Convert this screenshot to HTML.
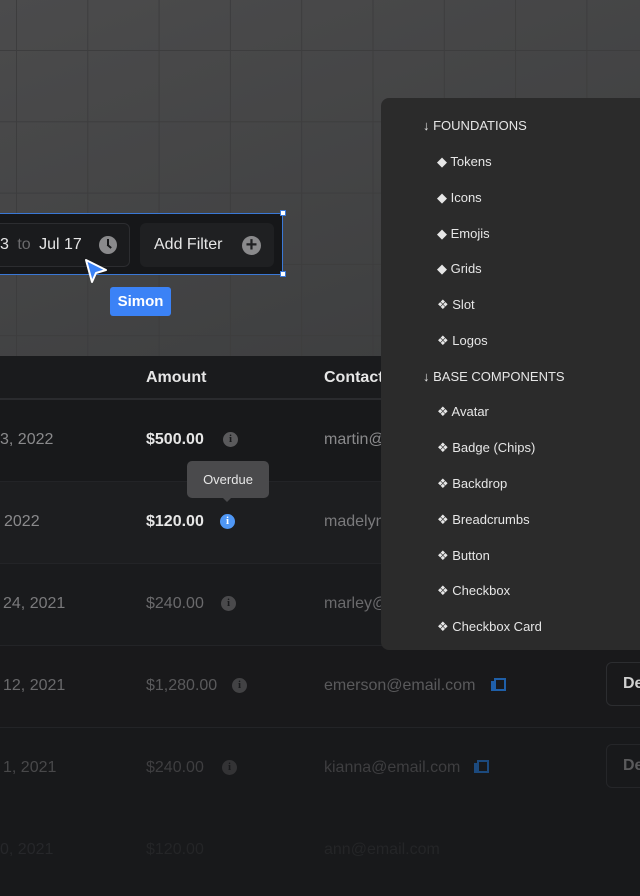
<!DOCTYPE html>
<html><head><style>
*{margin:0;padding:0;box-sizing:border-box}
body{width:640px;height:896px;overflow:hidden;background:#18191b;font-family:"Liberation Sans",sans-serif;position:relative}
.top{position:absolute;left:0;top:0;width:640px;height:356px;
background-image:linear-gradient(#3d3d3e 1px,transparent 1px),linear-gradient(90deg,#3d3d3e 1px,transparent 1px),linear-gradient(160deg,#4b4b4c,#3c3d3e);
background-size:71.3px 71.3px,71.3px 71.3px,100% 100%;background-position:16px 50px,16px 50px,0 0}
.a{position:absolute;white-space:nowrap}
.row{position:absolute;left:0;width:640px;height:82px;border-bottom:1px solid #232427}
.t{font-size:16px}
.info{position:absolute;width:15px;height:15px;border-radius:50%;background:#5a5a5c;color:#18191b;font-size:11px;font-weight:bold;text-align:center;line-height:15px;font-family:"Liberation Serif",serif}
.menu{position:absolute;left:381px;top:98px;width:270px;height:552px;background:#2b2b2b;border-radius:8px;color:#e6e6e6;font-size:13px}
.menu div{position:absolute;white-space:nowrap}
.copy{position:absolute;width:13px;height:13px}
.copy:before{content:"";position:absolute;left:0;top:3px;width:9px;height:10px;background:#1f5fa8;}
.copy:after{content:"";position:absolute;left:3px;top:0;width:8px;height:9px;border:2px solid #1f5fa8;background:#18191b}
.btn{position:absolute;left:606px;width:60px;height:44px;border:1px solid #2c2d30;border-radius:6px;color:#d0d0d0;font-weight:bold;font-size:16px;padding:12px 0 0 16px}
</style></head><body>
<div class="top"></div>
<div class="a" style="left:-3px;top:213px;width:286px;height:62px;background:#161719;border:1px solid #3a78d6"></div>
<div class="a" style="left:-10px;top:223px;width:140px;height:44px;border:1px solid #2c2d30;border-radius:6px;background:#1a1b1d"></div>
<div class="a t" style="left:0;top:236px;color:#e6e6e6">3 <span style="color:#6a6a6c;margin:0 4px">to</span> Jul 17</div>
<div class="a" style="left:99px;top:236px;width:18px;height:18px;border-radius:50%;background:#8a8a8c"><div style="position:absolute;left:8px;top:3px;width:2px;height:7px;background:#161719"></div><div style="position:absolute;left:9px;top:8px;width:5px;height:2px;background:#161719;transform:rotate(40deg);transform-origin:0 0"></div></div>
<div class="a" style="left:140px;top:223px;width:134px;height:44px;border-radius:6px;background:#1f2022"></div>
<div class="a t" style="left:154px;top:236px;color:#e6e6e6">Add Filter</div>
<div class="a" style="left:242px;top:236px;width:19px;height:19px;border-radius:50%;background:#8a8a8c;color:#1f2022;font-size:20px;font-weight:bold;text-align:center;line-height:19px">+</div>
<div class="a" style="left:280px;top:210px;width:6px;height:6px;background:#fff;border:1px solid #3a78d6"></div>
<div class="a" style="left:280px;top:271px;width:6px;height:6px;background:#fff;border:1px solid #3a78d6"></div>
<svg class="a" style="left:83px;top:257px" width="26" height="28" viewBox="0 0 26 28"><path d="M3 3 L23 13 L13 16 L9 25 Z" fill="#3b82f6" stroke="#fff" stroke-width="2" stroke-linejoin="round"/></svg>
<div class="a" style="left:110px;top:287px;width:61px;height:29px;background:#3b82f6;border-radius:3px;color:#fff;font-size:15px;font-weight:bold;text-align:center;line-height:29px">Simon</div>
<div class="a" style="left:0;top:356px;width:640px;height:44px;background:#1a1b1d;border-bottom:2px solid #2a2b2e"></div>
<div class="a t" style="left:146px;top:369px;color:#e6e6e6;font-weight:bold">Amount</div>
<div class="a t" style="left:324px;top:369px;color:#e6e6e6;font-weight:bold">Contact</div>
<div class="row" style="top:400px;background:#18191b"></div>
<div class="row" style="top:482px;background:#1d1e20"></div>
<div class="row" style="top:564px;background:#1a1b1d"></div>
<div class="row" style="top:646px;background:#19191b"></div>
<div class="row" style="top:728px;background:#18191b;border:none"></div>
<div class="a t" style="left:0;top:431px;color:#8a8a8c">3, 2022</div>
<div class="a t" style="left:146px;top:431px;color:#e6e6e6;font-weight:bold">$500.00</div>
<div class="info" style="left:223px;top:432px">i</div>
<div class="a t" style="left:324px;top:431px;color:#8a8a8c">martin@</div>
<div class="a t" style="left:4px;top:513px;color:#8a8a8c">2022</div>
<div class="a t" style="left:146px;top:513px;color:#e6e6e6;font-weight:bold">$120.00</div>
<div class="info" style="left:220px;top:514px;background:#4f97f5;color:#fff">i</div>
<div class="a t" style="left:324px;top:513px;color:#7a7a7c">madelyn</div>
<div class="a" style="left:187px;top:461px;width:82px;height:37px;background:#4a4a4c;border-radius:5px;color:#e6e6e6;font-size:13px;text-align:center;line-height:37px">Overdue</div>
<div class="a" style="left:222px;top:497px;width:0;height:0;border:5px solid transparent;border-top-color:#4a4a4c"></div>
<div class="a t" style="left:3px;top:595px;color:#7a7a7c">24, 2021</div>
<div class="a t" style="left:146px;top:595px;color:#6a6a6c">$240.00</div>
<div class="info" style="left:221px;top:596px;background:#4a4a4c">i</div>
<div class="a t" style="left:324px;top:595px;color:#6a6a6c">marley@</div>
<div class="a t" style="left:3px;top:677px;color:#6a6a6c">12, 2021</div>
<div class="a t" style="left:146px;top:677px;color:#5a5a5c">$1,280.00</div>
<div class="info" style="left:232px;top:678px;background:#424244">i</div>
<div class="a t" style="left:324px;top:677px;color:#5a5a5c">emerson@email.com</div>
<div class="copy" style="left:491px;top:678px"></div>
<div class="btn" style="top:662px">De</div>
<div class="a t" style="left:3px;top:759px;color:#48484a">1, 2021</div>
<div class="a t" style="left:146px;top:759px;color:#3e3e40">$240.00</div>
<div class="info" style="left:222px;top:760px;background:#333335">i</div>
<div class="a t" style="left:324px;top:759px;color:#3e3e40">kianna@email.com</div>
<div class="copy" style="left:474px;top:760px;opacity:.7"></div>
<div class="btn" style="top:744px;color:#5a5a5c;border-color:#252629">De</div>
<div class="a t" style="left:0;top:841px;color:#26272a">0, 2021</div>
<div class="a t" style="left:146px;top:841px;color:#242527">$120.00</div>
<div class="a t" style="left:324px;top:841px;color:#242527">ann@email.com</div>
<div class="menu">
<div style="left:42px;top:20px">↓ FOUNDATIONS</div>
<div style="left:56px;top:56px">◆ Tokens</div>
<div style="left:56px;top:92px">◆ Icons</div>
<div style="left:56px;top:128px">◆ Emojis</div>
<div style="left:56px;top:163px">◆ Grids</div>
<div style="left:56px;top:199px">❖ Slot</div>
<div style="left:56px;top:235px">❖ Logos</div>
<div style="left:42px;top:271px">↓ BASE COMPONENTS</div>
<div style="left:56px;top:306px">❖ Avatar</div>
<div style="left:56px;top:342px">❖ Badge (Chips)</div>
<div style="left:56px;top:378px">❖ Backdrop</div>
<div style="left:56px;top:414px">❖ Breadcrumbs</div>
<div style="left:56px;top:450px">❖ Button</div>
<div style="left:56px;top:485px">❖ Checkbox</div>
<div style="left:56px;top:521px">❖ Checkbox Card</div>
</div>
</body></html>
